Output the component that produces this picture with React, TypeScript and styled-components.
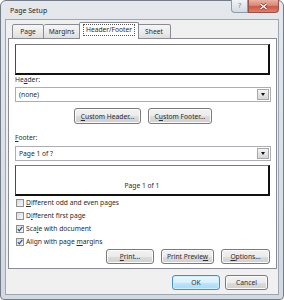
import React from "react";
import styled, { createGlobalStyle } from "styled-components";

const GlobalStyle = createGlobalStyle`
  html, body {
    margin: 0;
    padding: 0;
    background: #fff;
  }
  body {
    font-family: "Noto Sans", "Open Sans", sans-serif;
    font-size: 6.7px;
    color: #2b2b2b;
  }
`;

const Window = styled.div`
  width: 284px;
  height: 300px;
  box-sizing: border-box;
  border: 1px solid #737c88;
  border-radius: 6px 6px 4px 4px;
  background: linear-gradient(180deg, #e4e8ed 0%, #d9dfe6 60%, #d3d9e1 100%);
  padding: 0 4px 4px 4px;
  display: flex;
  flex-direction: column;
`;

const TitleBar = styled.div`
  height: 18px;
  display: flex;
  align-items: flex-start;
`;

const Title = styled.span`
  padding: 5px 0 0 5px;
  font-size: 7px;
  color: #262626;
`;

const Caption = styled.div`
  margin-left: auto;
  margin-top: -1px;
  display: flex;
`;

const CaptionButton = styled.span<{ $close?: boolean }>`
  width: ${(p) => (p.$close ? 31 : 17)}px;
  height: 13px;
  box-sizing: border-box;
  display: flex;
  align-items: center;
  justify-content: center;
  border: 1px solid ${(p) => (p.$close ? "#9a5248" : "#9099a5")};
  border-top: none;
  border-radius: ${(p) => (p.$close ? "0 0 4px 0" : "0 0 0 4px")};
  background: ${(p) =>
    p.$close
      ? "linear-gradient(180deg, #eab3a7 0%, #dc8676 45%, #cc5a45 55%, #d9806e 100%)"
      : "linear-gradient(180deg, #f1f4f7 0%, #e2e7ed 50%, #d3dae3 100%)"};
  color: #7a828d;
  font-size: 7px;
  font-family: "DejaVu Sans", sans-serif;
`;

const Client = styled.div`
  flex: 1;
  display: flex;
  flex-direction: column;
  border: 1px solid #9ea6b1;
  background: #f0f0f0;
  padding: 2px 1px 0 2px;
`;

const TabRow = styled.div`
  height: 17px;
  margin-bottom: -1px;
  padding-left: 4px;
  display: flex;
  align-items: flex-end;
`;

const Tab = styled.div<{ $w: number; $active?: boolean }>`
  width: ${(p) => p.$w}px;
  height: ${(p) => (p.$active ? 17 : 15)}px;
  box-sizing: border-box;
  display: flex;
  align-items: ${(p) => (p.$active ? "flex-start" : "center")};
  justify-content: center;
  padding-top: ${(p) => (p.$active ? 2 : 0)}px;
  padding-bottom: ${(p) => (p.$active ? 0 : 1)}px;
  border: 1px solid #898c95;
  border-left-width: ${(p) => (p.$active ? 1 : 0)}px;
  border-bottom: ${(p) => (p.$active ? "none" : "1px solid #898c95")};
  border-radius: 2px 2px 0 0;
  background: ${(p) =>
    p.$active ? "#fff" : "linear-gradient(180deg, #f6f6f6 0%, #ececec 50%, #dedede 100%)"};
  position: ${(p) => (p.$active ? "relative" : "static")};
  margin-left: ${(p) => (p.$active ? -1 : 0)}px;
  margin-right: ${(p) => (p.$active ? -1 : 0)}px;
  &:first-child {
    border-left-width: 1px;
  }
`;

const FocusLabel = styled.span`
  outline: 1px dotted #555;
  outline-offset: 0;
  padding: 0 2px;
  line-height: 10px;
`;

const Panel = styled.div`
  border: 1px solid #898c95;
  background: #fff;
  padding: 5px 5px 4px 6px;
  display: flex;
  flex-direction: column;
`;

const Preview = styled.div<{ $mt: number }>`
  margin-top: ${(p) => p.$mt}px;
  margin-right: 1px;
  height: 31px;
  box-sizing: border-box;
  border-top: 1px solid #7a7a7a;
  border-left: 1px solid #4a4a4a;
  border-right: 2px solid #111;
  border-bottom: 2px solid #111;
  display: flex;
  align-items: flex-end;
  justify-content: center;
  padding-bottom: 4px;
`;

const FieldLabel = styled.div<{ $mt: number }>`
  margin-top: ${(p) => p.$mt}px;
  height: 10px;
  line-height: 10px;
`;

const Combo = styled.div<{ $mt: number }>`
  margin-top: ${(p) => p.$mt}px;
  height: 15px;
  box-sizing: border-box;
  border: 1px solid #abadb3;
  background: #fff;
  display: flex;
  align-items: center;
  padding-left: 3px;
`;

const ComboText = styled.span`
  flex: 1;
`;

const DropButton = styled.span`
  width: 12px;
  height: 11px;
  box-sizing: border-box;
  margin-right: 1px;
  border: 1px solid #a7a7a7;
  background: linear-gradient(180deg, #f4f4f4 0%, #e6e6e6 50%, #d6d6d6 100%);
  display: flex;
  align-items: center;
  justify-content: center;
`;

const Arrow = styled.span`
  width: 0;
  height: 0;
  border-left: 2.5px solid transparent;
  border-right: 2.5px solid transparent;
  border-top: 3px solid #111;
`;

const ButtonRow = styled.div<{ $mt: number; $align: string; $pr?: number }>`
  margin-top: ${(p) => p.$mt}px;
  padding-right: ${(p) => p.$pr ?? 0}px;
  display: flex;
  justify-content: ${(p) => p.$align};
  gap: 7px;
`;

const Button = styled.button<{ $w: number; $h?: number; $default?: boolean }>`
  width: ${(p) => p.$w}px;
  height: ${(p) => p.$h ?? 16}px;
  padding: 0;
  margin: 0;
  box-sizing: border-box;
  font-family: inherit;
  font-size: 6.7px;
  color: #2b2b2b;
  border: 1px solid ${(p) => (p.$default ? "#4b8ec0" : "#7a7a7a")};
  border-radius: 3px;
  background: ${(p) =>
    p.$default
      ? "linear-gradient(180deg, #eaf6fd 0%, #d9f0fc 50%, #bee6fd 51%, #a7d9f5 100%)"
      : "linear-gradient(180deg, #f2f2f2 0%, #ebebeb 50%, #dddddd 51%, #cfcfcf 100%)"};
  box-shadow: inset 0 0 0 1px ${(p) => (p.$default ? "#cdeefc" : "#fbfbfb")};
`;

const Checks = styled.div`
  display: flex;
  flex-direction: column;
  padding-left: 1px;
`;

const CheckRow = styled.label`
  height: 13px;
  display: flex;
  align-items: center;
  gap: 2px;
`;

const Box = styled.span`
  width: 8px;
  height: 8px;
  box-sizing: border-box;
  border: 1px solid #8e8f8f;
  background: linear-gradient(135deg, #dcdcdc 0%, #f6f6f6 100%);
  display: flex;
  align-items: center;
  justify-content: center;
`;

const BottomRow = styled(ButtonRow)`
  gap: 5px;
`;

const CheckBox = ({ checked, children }: { checked?: boolean; children: React.ReactNode }) => (
  <CheckRow>
    <Box>
      {checked && (
        <svg width="6" height="6" viewBox="0 0 6 6">
          <path d="M0.8 3.2 L2.3 4.8 L5.3 0.9" fill="none" stroke="#2d4f8e" strokeWidth="1.2" />
        </svg>
      )}
    </Box>
    <span>{children}</span>
  </CheckRow>
);

const App: React.FC = () => {
  return (
    <>
      <GlobalStyle />
      <Window>
        <TitleBar>
          <Title>Page Setup</Title>
          <Caption>
            <CaptionButton>?</CaptionButton>
            <CaptionButton $close>
              <svg width="9" height="7" viewBox="0 0 9 7">
                <path d="M1.5 1 L7.5 6 M7.5 1 L1.5 6" stroke="#7a2b20" strokeWidth="2.6" />
                <path d="M1.5 1 L7.5 6 M7.5 1 L1.5 6" stroke="#fff" strokeWidth="1.5" />
              </svg>
            </CaptionButton>
          </Caption>
        </TitleBar>
        <Client>
          <TabRow>
            <Tab $w={32}>Page</Tab>
            <Tab $w={36}>Margins</Tab>
            <Tab $w={60} $active>
              <FocusLabel>Header/Footer</FocusLabel>
            </Tab>
            <Tab $w={33}>Sheet</Tab>
          </TabRow>
          <Panel>
            <Preview $mt={0} />
            <FieldLabel $mt={0}>
              He<u>a</u>der:
            </FieldLabel>
            <Combo $mt={2}>
              <ComboText>(none)</ComboText>
              <DropButton>
                <Arrow />
              </DropButton>
            </Combo>
            <ButtonRow $mt={6} $align="center">
              <Button $w={67}>
                <u>C</u>ustom Header...
              </Button>
              <Button $w={64}>
                C<u>u</u>stom Footer...
              </Button>
            </ButtonRow>
            <FieldLabel $mt={9}>
              <u>F</u>ooter:
            </FieldLabel>
            <Combo $mt={3}>
              <ComboText>Page 1 of ?</ComboText>
              <DropButton>
                <Arrow />
              </DropButton>
            </Combo>
            <Preview $mt={4}>Page 1 of 1</Preview>
            <Checks>
              <CheckBox>
                <u>D</u>ifferent odd and even pages
              </CheckBox>
              <CheckBox>
                D<u>i</u>fferent first page
              </CheckBox>
              <CheckBox checked>
                Sca<u>l</u>e with document
              </CheckBox>
              <CheckBox checked>
                Align with page <u>m</u>argins
              </CheckBox>
            </Checks>
            <ButtonRow $mt={1} $align="flex-end" $pr={1}>
              <Button $w={48} $h={15}>
                <u>P</u>rint...
              </Button>
              <Button $w={53} $h={15}>
                Print Previe<u>w</u>
              </Button>
              <Button $w={49} $h={15}>
                <u>O</u>ptions...
              </Button>
            </ButtonRow>
          </Panel>
          <BottomRow $mt={6} $align="flex-end" $pr={9}>
            <Button $w={48} $h={15} $default>
              OK
            </Button>
            <Button $w={43} $h={15}>
              Cancel
            </Button>
          </BottomRow>
        </Client>
      </Window>
    </>
  );
};

export default App;
